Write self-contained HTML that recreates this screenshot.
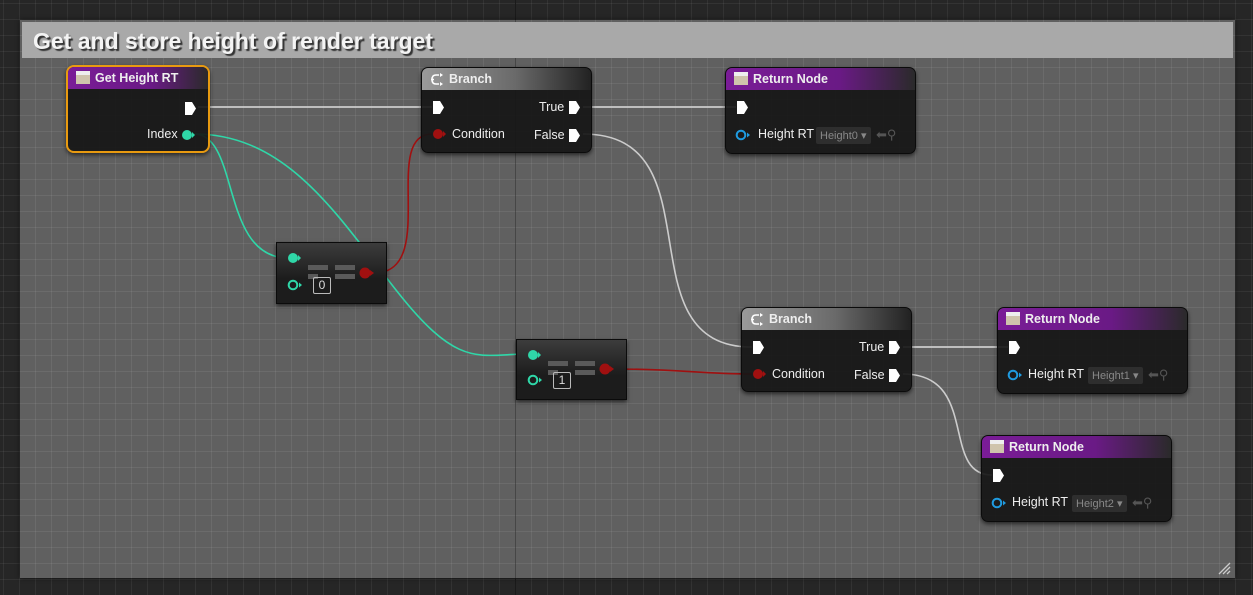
<!DOCTYPE html><html><head><meta charset="utf-8"><style>
*{margin:0;padding:0;box-sizing:border-box}
body{width:1253px;height:595px;overflow:hidden;position:relative;font-family:"Liberation Sans",sans-serif;
background-color:#262626;
background-image:linear-gradient(#1a1a1a,#1a1a1a),linear-gradient(90deg,#1a1a1a,#1a1a1a),linear-gradient(rgba(255,255,255,.06) 1px,transparent 1px),linear-gradient(90deg,rgba(255,255,255,.06) 1px,transparent 1px);
background-size:2px 100%,1px 100%,16px 16px,16px 16px;background-position:-10px 0,515px 0,0 3px,3px 0;background-repeat:no-repeat,no-repeat,repeat,repeat}
.cm{position:absolute;left:20px;top:20px;width:1215px;height:558px;background-color:#606060;
background-image:linear-gradient(90deg,rgba(0,0,0,.35) 1px,transparent 1px),linear-gradient(rgba(255,255,255,.07) 1px,transparent 1px),linear-gradient(90deg,rgba(255,255,255,.07) 1px,transparent 1px);
background-size:100% 100%,16px 16px,16px 16px;background-position:495px 0,0 -1px,-1px 0;background-repeat:no-repeat,repeat,repeat;box-shadow:0 0 4px #111}
.tt{position:absolute;left:2px;top:2px;right:2px;height:36px;background:#a9a9a9;color:#f4f4f4;font-weight:bold;font-size:23px;padding:6px 0 0 11px;text-shadow:2px 2px 1px #333}
.n{position:absolute;background:rgba(22,22,22,.92);border-radius:7px;box-shadow:0 2px 4px rgba(0,0,0,.6);border:1px solid #0b0b0b;color:#eee;font-size:12.5px}
.h{height:22px;border-radius:6px 6px 0 0;padding:4px 0 0 27px;font-weight:bold;font-size:12.5px;position:relative}
.hp{background:linear-gradient(90deg,#7a1c97,#6a1a85 60%,#2a2a2a)}
.hg{background:linear-gradient(90deg,#9a9a9a,#6a6a6a 55%,#222)}
.ic{position:absolute;left:8px;top:4px;width:14px;height:13px;background:#cfc4ac;border-top:4px solid #eee}
.l{position:absolute;white-space:nowrap}
.box{position:absolute;background:#2e2e2e;border-radius:2px;color:#888;font-size:11px;padding:2px 4px}
.cmp{position:absolute;background:linear-gradient(#3c3c3c,#1c1c1c 60%);border:1px solid #0b0b0b;box-shadow:0 2px 4px rgba(0,0,0,.6)}
.bar{position:absolute;height:5px;width:20px;background:#5a5a5a}
</style></head><body>
<div class="cm"><div class="tt">Get and store height of render target</div>
<svg style="position:absolute;right:4px;bottom:3px" width="14" height="14"><path d="M2 13L13 2M6 13L13 6M10 13L13 10" stroke="#ccc" stroke-width="1.3"/></svg></div>

<svg style="position:absolute;left:0;top:0" width="1253" height="595" fill="none" stroke-width="1.6">
<path d="M198 107H432" stroke="#ddd"/>
<path d="M583 107H736" stroke="#ddd"/>
<path d="M903 347H1008" stroke="#ddd"/>
<path d="M194 134C240 134 220 258 288 258" stroke="#2fd7a8"/>
<path d="M194 134C290 134 340 220 400 295S480 354 528 354" stroke="#2fd7a8"/>
<path d="M374 273C440 273 380 134 432 134" stroke="#a01010"/>
<path d="M614 369C680 369 700 374 752 374" stroke="#a01010"/>
<path d="M583 134C720 134 620 347 752 347" stroke="#ccc"/>
<path d="M903 374C980 374 940 475 992 475" stroke="#ccc"/>
</svg>

<!-- Get Height RT -->
<div class="n" style="left:66px;top:65px;width:144px;height:88px;border:2px solid #e89a10;border-radius:8px">
<div class="h hp"><div class="ic"></div>Get Height RT</div>
<svg class="l" style="left:116px;top:34px" width="13" height="15"><path d="M1 1H8L12 7.5L8 14H1Z" fill="#fff"/></svg>
<div class="l" style="left:79px;top:60px">Index</div>
<svg class="l" style="left:113px;top:62px" width="14" height="12"><circle cx="6" cy="6" r="5" fill="#2fd7a8"/><path d="M11 3L14 6L11 9Z" fill="#2fd7a8"/></svg>
</div>

<!-- Branch 1 -->
<div class="n" style="left:421px;top:67px;width:171px;height:86px">
<div class="h hg"><svg class="l" style="left:8px;top:5px" width="16" height="13"><path d="M9 2H6Q2 2 2 6.5Q2 11 6 11H9M4 6.5H1" stroke="#fff" stroke-width="1.6" fill="none"/><path d="M10 0L13 2L10 4ZM10 9L13 11L10 13Z" fill="#fff"/></svg>Branch</div>
<svg class="l" style="left:10px;top:32px" width="13" height="15"><path d="M1 1H8L12 7.5L8 14H1Z" fill="#fff"/></svg>
<svg class="l" style="left:10px;top:60px" width="14" height="12"><circle cx="6" cy="6" r="5" fill="#a01010"/><path d="M11 3L14 6L11 9Z" fill="#a01010"/></svg>
<div class="l" style="left:30px;top:59px">Condition</div>
<div class="l" style="left:117px;top:32px">True</div>
<svg class="l" style="left:146px;top:32px" width="13" height="15"><path d="M1 1H8L12 7.5L8 14H1Z" fill="#fff"/></svg>
<div class="l" style="left:112px;top:60px">False</div>
<svg class="l" style="left:146px;top:60px" width="13" height="15"><path d="M1 1H8L12 7.5L8 14H1Z" fill="#fff"/></svg>
</div>

<!-- Branch 2 -->
<div class="n" style="left:741px;top:307px;width:171px;height:85px">
<div class="h hg"><svg class="l" style="left:8px;top:5px" width="16" height="13"><path d="M9 2H6Q2 2 2 6.5Q2 11 6 11H9M4 6.5H1" stroke="#fff" stroke-width="1.6" fill="none"/><path d="M10 0L13 2L10 4ZM10 9L13 11L10 13Z" fill="#fff"/></svg>Branch</div>
<svg class="l" style="left:10px;top:32px" width="13" height="15"><path d="M1 1H8L12 7.5L8 14H1Z" fill="#fff"/></svg>
<svg class="l" style="left:10px;top:60px" width="14" height="12"><circle cx="6" cy="6" r="5" fill="#a01010"/><path d="M11 3L14 6L11 9Z" fill="#a01010"/></svg>
<div class="l" style="left:30px;top:59px">Condition</div>
<div class="l" style="left:117px;top:32px">True</div>
<svg class="l" style="left:146px;top:32px" width="13" height="15"><path d="M1 1H8L12 7.5L8 14H1Z" fill="#fff"/></svg>
<div class="l" style="left:112px;top:60px">False</div>
<svg class="l" style="left:146px;top:60px" width="13" height="15"><path d="M1 1H8L12 7.5L8 14H1Z" fill="#fff"/></svg>
</div>

<!-- Return nodes -->
<div class="n" style="left:725px;top:67px;width:191px;height:87px">
<div class="h hp"><div class="ic"></div>Return Node</div>
<svg class="l" style="left:10px;top:32px" width="13" height="15"><path d="M1 1H8L12 7.5L8 14H1Z" fill="#fff"/></svg>
<svg class="l" style="left:9px;top:61px" width="16" height="12"><circle cx="6" cy="6" r="4.3" stroke="#1f9be0" stroke-width="2" fill="none"/><path d="M12 3.5L15 6L12 8.5Z" fill="#1f9be0"/></svg>
<div class="l" style="left:32px;top:59px">Height RT</div>
<div class="box" style="left:90px;top:59px">Height0 ▾</div>
<div class="l" style="left:150px;top:59px;color:#555;font-size:13px">⬅⚲</div>
</div>
<div class="n" style="left:997px;top:307px;width:191px;height:87px">
<div class="h hp"><div class="ic"></div>Return Node</div>
<svg class="l" style="left:10px;top:32px" width="13" height="15"><path d="M1 1H8L12 7.5L8 14H1Z" fill="#fff"/></svg>
<svg class="l" style="left:9px;top:61px" width="16" height="12"><circle cx="6" cy="6" r="4.3" stroke="#1f9be0" stroke-width="2" fill="none"/><path d="M12 3.5L15 6L12 8.5Z" fill="#1f9be0"/></svg>
<div class="l" style="left:30px;top:59px">Height RT</div>
<div class="box" style="left:90px;top:59px">Height1 ▾</div>
<div class="l" style="left:150px;top:59px;color:#555;font-size:13px">⬅⚲</div>
</div>
<div class="n" style="left:981px;top:435px;width:191px;height:87px">
<div class="h hp"><div class="ic"></div>Return Node</div>
<svg class="l" style="left:10px;top:32px" width="13" height="15"><path d="M1 1H8L12 7.5L8 14H1Z" fill="#fff"/></svg>
<svg class="l" style="left:9px;top:61px" width="16" height="12"><circle cx="6" cy="6" r="4.3" stroke="#1f9be0" stroke-width="2" fill="none"/><path d="M12 3.5L15 6L12 8.5Z" fill="#1f9be0"/></svg>
<div class="l" style="left:30px;top:59px">Height RT</div>
<div class="box" style="left:90px;top:59px">Height2 ▾</div>
<div class="l" style="left:150px;top:59px;color:#555;font-size:13px">⬅⚲</div>
</div>

<!-- compare nodes -->
<div class="cmp" style="left:276px;top:242px;width:111px;height:62px">
<svg class="l" style="left:10px;top:9px" width="14" height="12"><circle cx="6" cy="6" r="5" fill="#2fd7a8"/><path d="M11 3L14 6L11 9Z" fill="#2fd7a8"/></svg>
<svg class="l" style="left:10px;top:36px" width="16" height="12"><circle cx="6" cy="6" r="4.3" stroke="#2fd7a8" stroke-width="2" fill="none"/><path d="M12 3.5L15 6L12 8.5Z" fill="#2fd7a8"/></svg>
<div class="bar" style="left:31px;top:22px"></div><div class="bar" style="left:58px;top:22px"></div><div class="bar" style="left:31px;top:31px;width:10px"></div><div class="bar" style="left:58px;top:31px"></div>
<div class="l" style="left:36px;top:34px;width:18px;height:17px;border:1px solid #bbb;border-radius:2px;font-size:12px;color:#ddd;text-align:center;line-height:15px">0</div>
<svg class="l" style="left:82px;top:24px" width="16" height="12"><circle cx="6" cy="6" r="5.5" fill="#a01010"/><path d="M11 3L15 6L11 9Z" fill="#a01010"/></svg>
</div>
<div class="cmp" style="left:516px;top:339px;width:111px;height:61px">
<svg class="l" style="left:10px;top:9px" width="14" height="12"><circle cx="6" cy="6" r="5" fill="#2fd7a8"/><path d="M11 3L14 6L11 9Z" fill="#2fd7a8"/></svg>
<svg class="l" style="left:10px;top:34px" width="16" height="12"><circle cx="6" cy="6" r="4.3" stroke="#2fd7a8" stroke-width="2" fill="none"/><path d="M12 3.5L15 6L12 8.5Z" fill="#2fd7a8"/></svg>
<div class="bar" style="left:31px;top:21px"></div><div class="bar" style="left:58px;top:21px"></div><div class="bar" style="left:31px;top:30px;width:10px"></div><div class="bar" style="left:58px;top:30px"></div>
<div class="l" style="left:36px;top:32px;width:18px;height:17px;border:1px solid #bbb;border-radius:2px;font-size:12px;color:#ddd;text-align:center;line-height:15px">1</div>
<svg class="l" style="left:82px;top:23px" width="16" height="12"><circle cx="6" cy="6" r="5.5" fill="#a01010"/><path d="M11 3L15 6L11 9Z" fill="#a01010"/></svg>
</div>
</body></html>
